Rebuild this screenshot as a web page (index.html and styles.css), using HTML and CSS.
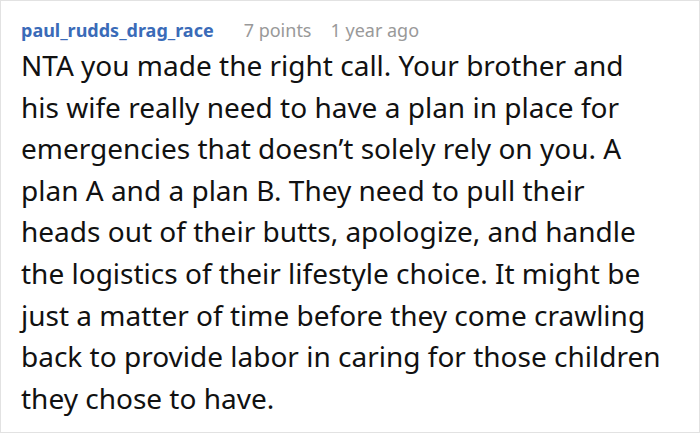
FILE: index.html
```html
<!DOCTYPE html>
<html>
<head>
<meta charset="utf-8">
<link rel="stylesheet" href="styles.css">
</head>
<body>
<div class="comment">
  <div class="meta">
    <span class="author">paul_rudds_drag_race</span>
    <span class="points">7 points</span>
    <span class="time">1 year ago</span>
  </div>
  <p class="text">NTA you made the right call. Your brother and<br>his wife really need to have a plan in place for<br>emergencies that doesn’t solely rely on you. A<br>plan A and a plan B. They need to pull their<br>heads out of their butts, apologize, and handle<br>the logistics of their lifestyle choice. It might be<br>just a matter of time before they come crawling<br>back to provide labor in caring for those children<br>they chose to have.</p>
</div>
</body>
</html>
```
FILE: styles.css
```css
html, body {
  margin: 0;
  padding: 0;
  background: #fff;
}
.comment {
  box-sizing: border-box;
  width: 700px;
  height: 433px;
  border: 1px solid #e2e2e2;
  padding: 17px 10px 0 20px;
  font-family: "Noto Sans", sans-serif;
}
.meta {
  display: flex;
  align-items: baseline;
  font-size: 18px;
  line-height: 24px;
}
.author {
  color: #3a6bb8;
  font-weight: 700;
  margin-right: 30px;
}
.points {
  color: #999;
  margin-right: 19px;
}
.time {
  color: #999;
}
.text {
  margin: 3px 0 0 0;
  font-size: 28px;
  line-height: 41.6px;
  color: #111;
  white-space: nowrap;
}
```
